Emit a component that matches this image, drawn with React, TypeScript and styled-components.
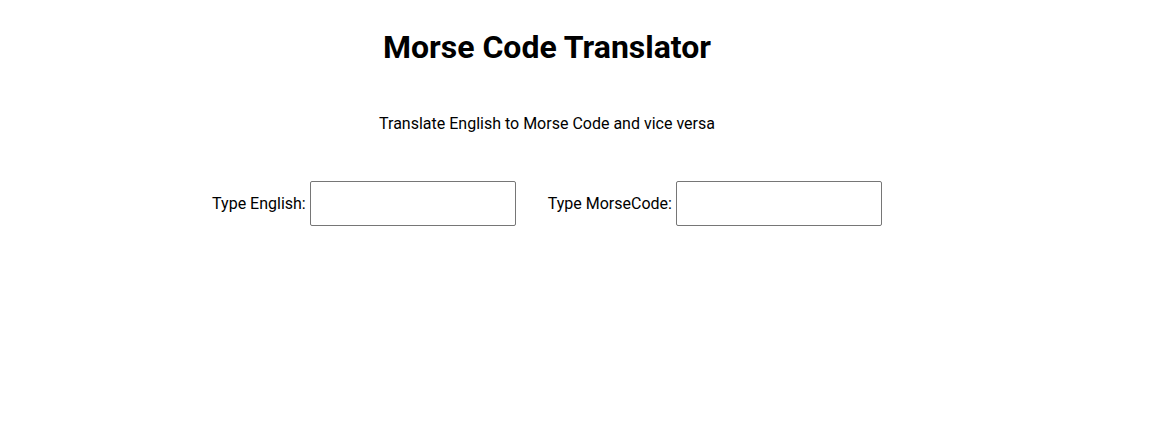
import React from "react";
import styled, { createGlobalStyle } from "styled-components";

const Global = createGlobalStyle`
  body {
    margin: 0;
    font-family: Roboto, "Noto Sans", sans-serif;
    color: #000;
    background: #fff;
  }
`;

const Page = styled.main`
  width: 1094px;
  text-align: center;
  padding-top: 28px;
`;

const Title = styled.h1`
  margin: 0;
  font-size: 32px;
  font-weight: 700;
  line-height: 38px;
`;

const Subtitle = styled.p`
  margin: 48px 0 0;
  font-size: 16px;
  line-height: 20px;
`;

const Row = styled.div`
  display: flex;
  justify-content: center;
  align-items: center;
  gap: 32px;
  margin-top: 47px;
`;

const Field = styled.label`
  display: flex;
  align-items: center;
  gap: 4px;
  font-size: 16px;
`;

const Input = styled.input`
  width: 206px;
  height: 45px;
  box-sizing: border-box;
  border: 1px solid #767676;
  border-radius: 2px;
  padding: 0 8px;
  font-family: inherit;
  font-size: 16px;
`;

export default function App() {
  return (
    <>
      <Global />
      <Page>
        <Title>Morse Code Translator</Title>
        <Subtitle>Translate English to Morse Code and vice versa</Subtitle>
        <Row>
          <Field>
            Type English:
            <Input type="text" />
          </Field>
          <Field>
            Type MorseCode:
            <Input type="text" />
          </Field>
        </Row>
      </Page>
    </>
  );
}
